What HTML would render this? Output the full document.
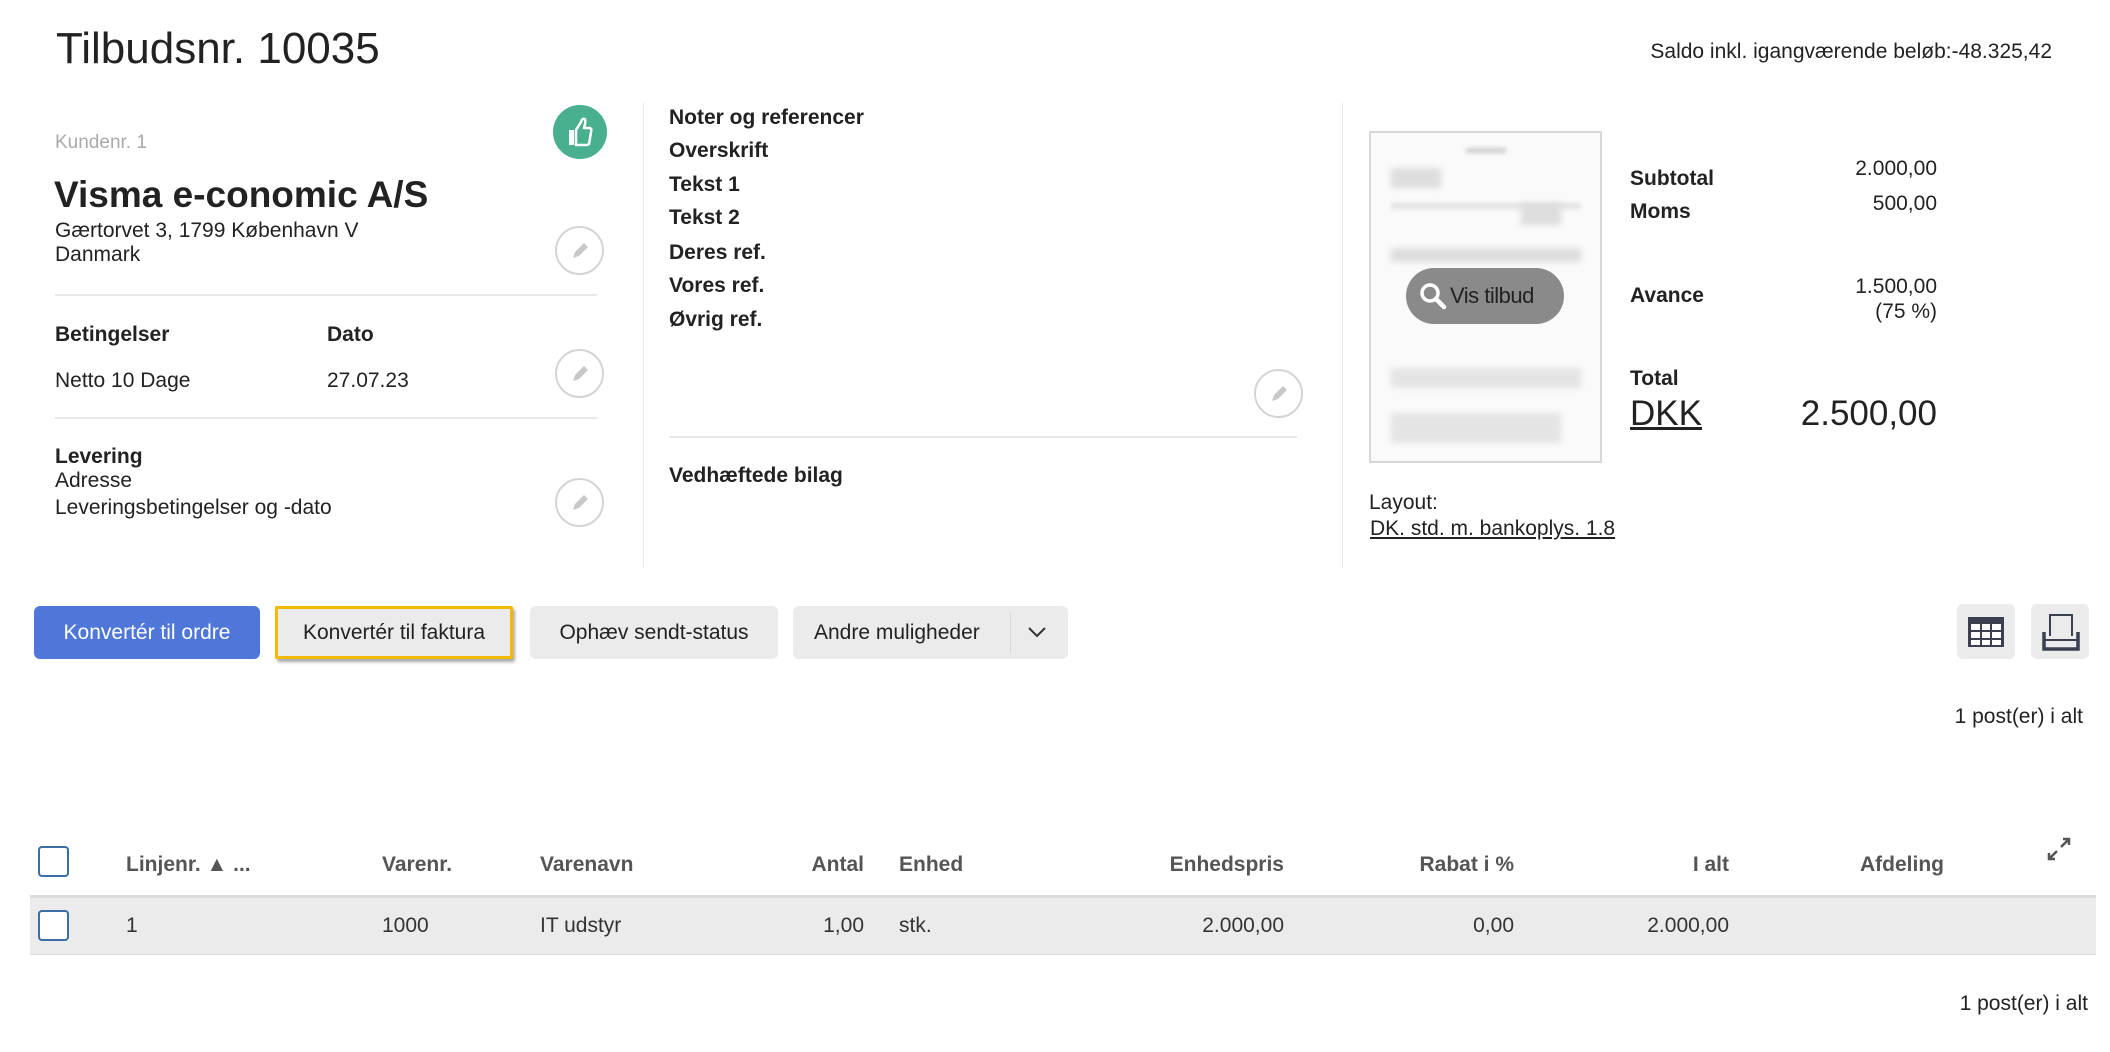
<!DOCTYPE html>
<html><head><meta charset="utf-8"><style>
*{margin:0;padding:0;box-sizing:border-box}
body{width:2110px;height:1052px;background:#fff;font-family:"Liberation Sans",Arial,sans-serif;color:#222;position:relative;overflow:hidden}
.a{position:absolute;white-space:nowrap;line-height:1}
.b{font-weight:bold}
.r{text-align:right}
.t20{font-size:21px}
.ed{position:absolute;width:49px;height:49px;border:2px solid #d4d4d4;border-radius:50%}
.ed svg{position:absolute;left:12px;top:12px}
.vl{position:absolute;width:1px;background:#e6e6e6}
.hl{position:absolute;height:2px;background:#e8e8e8}
.btn{position:absolute;top:606px;height:53px;border-radius:6px;background:#ebebeb;font-size:21px;display:flex;align-items:center;justify-content:center;color:#222}
.th{font-size:21px;font-weight:bold;color:#555;top:854px}
.td{font-size:21px;color:#333;top:915px}
.cb{position:absolute;width:31px;height:31px;border:2px solid #3a6ea5;border-radius:4px;background:#fff}
</style></head><body>
<div class="a" style="left:56px;top:27px;font-size:44px;color:#222">Tilbudsnr. 10035</div>
<div class="a t20" style="right:58px;top:41px">Saldo inkl. igangværende beløb:-48.325,42</div>

<div class="a" style="left:55px;top:133px;font-size:19px;color:#aaa">Kundenr. 1</div>
<div class="a" style="left:553px;top:105px;width:54px;height:54px;border-radius:50%;background:#48b08f">
<svg width="54" height="54" viewBox="0 0 54 54"><rect x="16" y="25" width="5" height="15" fill="#fff"/><path d="M23 25 L28 17 Q29 13 32 14 Q33 17 31 23 L37 23 Q39 24 38 27 L36 39 Q35 40 33 40 L23 40 Z" fill="none" stroke="#fff" stroke-width="2.5" stroke-linejoin="round"/></svg></div>
<div class="a b" style="left:54px;top:176px;font-size:37px;color:#222">Visma e-conomic A/S</div>
<div class="a t20" style="left:55px;top:220px">Gærtorvet 3, 1799 København V</div>
<div class="a t20" style="left:55px;top:244px">Danmark</div>
<div class="hl" style="left:55px;top:294px;width:542px"></div>
<div class="a t20 b" style="left:55px;top:324px">Betingelser</div>
<div class="a t20 b" style="left:327px;top:324px">Dato</div>
<div class="a t20" style="left:55px;top:370px">Netto 10 Dage</div>
<div class="a t20" style="left:327px;top:370px">27.07.23</div>
<div class="hl" style="left:55px;top:417px;width:542px"></div>
<div class="a t20 b" style="left:55px;top:446px">Levering</div>
<div class="a t20" style="left:55px;top:470px">Adresse</div>
<div class="a t20" style="left:55px;top:497px">Leveringsbetingelser og -dato</div>

<div class="ed" style="left:555px;top:226px"><svg width="22" height="22" viewBox="0 0 22 22"><path d="M4 18 L6 12 L15 3 L19 7 L10 16 Z" fill="#c8c8c8"/></svg></div>
<div class="ed" style="left:555px;top:349px"><svg width="22" height="22" viewBox="0 0 22 22"><path d="M4 18 L6 12 L15 3 L19 7 L10 16 Z" fill="#c8c8c8"/></svg></div>
<div class="ed" style="left:555px;top:478px"><svg width="22" height="22" viewBox="0 0 22 22"><path d="M4 18 L6 12 L15 3 L19 7 L10 16 Z" fill="#c8c8c8"/></svg></div>
<div class="ed" style="left:1254px;top:369px"><svg width="22" height="22" viewBox="0 0 22 22"><path d="M4 18 L6 12 L15 3 L19 7 L10 16 Z" fill="#c8c8c8"/></svg></div>

<div class="vl" style="left:643px;top:103px;height:465px"></div>
<div class="vl" style="left:1342px;top:103px;height:465px"></div>

<div class="a t20 b" style="left:669px;top:107px">Noter og referencer</div>
<div class="a t20 b" style="left:669px;top:140px">Overskrift</div>
<div class="a t20 b" style="left:669px;top:174px">Tekst 1</div>
<div class="a t20 b" style="left:669px;top:207px">Tekst 2</div>
<div class="a t20 b" style="left:669px;top:242px">Deres ref.</div>
<div class="a t20 b" style="left:669px;top:275px">Vores ref.</div>
<div class="a t20 b" style="left:669px;top:309px">Øvrig ref.</div>
<div class="hl" style="left:669px;top:436px;width:628px"></div>
<div class="a t20 b" style="left:669px;top:465px">Vedhæftede bilag</div>

<div class="a" style="left:1369px;top:131px;width:233px;height:332px;border:2px solid #d8d8d8;background:#fafafa;overflow:hidden">
<div style="position:absolute;left:95px;top:15px;width:40px;height:5px;background:#ccc;filter:blur(2px)"></div>
<div style="position:absolute;left:20px;top:35px;width:50px;height:20px;background:#ddd;filter:blur(3px)"></div>
<div style="position:absolute;left:20px;top:70px;width:190px;height:6px;background:#e2e2e2;filter:blur(2px)"></div>
<div style="position:absolute;left:150px;top:70px;width:40px;height:22px;background:#ddd;filter:blur(3px)"></div>
<div style="position:absolute;left:20px;top:115px;width:190px;height:14px;background:#ddd;filter:blur(3px)"></div>
<div style="position:absolute;left:20px;top:235px;width:190px;height:20px;background:#e4e4e4;filter:blur(3px)"></div>
<div style="position:absolute;left:20px;top:280px;width:170px;height:30px;background:#e4e4e4;filter:blur(3px)"></div>
</div>
<div class="a" style="left:1406px;top:268px;width:158px;height:56px;border-radius:28px;background:#8a8a8a;display:flex;align-items:center;padding-left:12px">
<svg width="30" height="30" viewBox="0 0 30 30"><circle cx="12" cy="12" r="8" fill="none" stroke="#fff" stroke-width="3.5"/><path d="M18 18 L26 26" stroke="#fff" stroke-width="4.5" stroke-linecap="round"/></svg>
<span style="font-size:22px;color:#222;margin-left:2px;letter-spacing:-0.5px">Vis tilbud</span></div>

<div class="a t20 b" style="left:1630px;top:168px">Subtotal</div>
<div class="a t20 r" style="right:173px;top:158px">2.000,00</div>
<div class="a t20 b" style="left:1630px;top:201px">Moms</div>
<div class="a t20 r" style="right:173px;top:193px">500,00</div>
<div class="a t20 b" style="left:1630px;top:285px">Avance</div>
<div class="a t20 r" style="right:173px;top:276px">1.500,00</div>
<div class="a t20 r" style="right:173px;top:301px">(75 %)</div>
<div class="a t20 b" style="left:1630px;top:368px">Total</div>
<div class="a" style="left:1630px;top:396px;font-size:35px;text-decoration:underline">DKK</div>
<div class="a r" style="right:173px;top:396px;font-size:35px">2.500,00</div>
<div class="a t20" style="left:1369px;top:492px">Layout:</div>
<div class="a t20" style="left:1370px;top:518px;text-decoration:underline">DK. std. m. bankoplys. 1.8</div>

<div class="btn" style="left:34px;width:226px;background:#4f76d9;color:#fff">Konvertér til ordre</div>
<div class="btn" style="left:275px;width:238px;border:3px solid #f3b800;border-radius:2px;box-shadow:2px 3px 3px rgba(0,0,0,.35)">Konvertér til faktura</div>
<div class="btn" style="left:530px;width:248px">Ophæv sendt-status</div>
<div class="btn" style="left:793px;width:275px;justify-content:flex-start;padding-left:21px">Andre muligheder
<div style="position:absolute;left:217px;top:6px;width:1px;height:41px;background:#d6d6d6"></div>
<svg style="position:absolute;left:234px;top:19px" width="20" height="14" viewBox="0 0 20 14"><path d="M2 3 L10 11 L18 3" fill="none" stroke="#333" stroke-width="2"/></svg></div>

<div class="btn" style="left:1957px;top:604px;width:58px;height:55px">
<svg width="38" height="32" viewBox="0 0 38 32"><rect x="1" y="1" width="36" height="30" fill="#3c3f52"/><g fill="#fff"><rect x="4" y="8" width="9" height="6"/><rect x="15" y="8" width="8" height="6"/><rect x="25" y="8" width="9" height="6"/><rect x="4" y="16" width="9" height="6"/><rect x="15" y="16" width="8" height="6"/><rect x="25" y="16" width="9" height="6"/><rect x="4" y="24" width="9" height="5"/><rect x="15" y="24" width="8" height="5"/><rect x="25" y="24" width="9" height="5"/></g></svg></div>
<div class="btn" style="left:2031px;top:604px;width:58px;height:55px">
<svg width="40" height="40" viewBox="0 0 40 40"><path d="M10 24 V3 H32 V24" fill="none" stroke="#3c3f52" stroke-width="2"/><path d="M4 20 V37 H38 V20" fill="none" stroke="#3c3f52" stroke-width="3.5"/><path d="M5 28 H37" stroke="#3c3f52" stroke-width="2"/></svg></div>

<div class="a t20 r" style="right:27px;top:706px">1 post(er) i alt</div>

<div class="cb" style="left:38px;top:846px"></div>
<div class="a th" style="left:126px">Linjenr. ▲ ...</div>
<div class="a th" style="left:382px">Varenr.</div>
<div class="a th" style="left:540px">Varenavn</div>
<div class="a th r" style="right:1246px">Antal</div>
<div class="a th" style="left:899px">Enhed</div>
<div class="a th r" style="right:826px">Enhedspris</div>
<div class="a th r" style="right:596px">Rabat i %</div>
<div class="a th r" style="right:381px">I alt</div>
<div class="a th" style="left:1860px">Afdeling</div>
<svg class="a" style="left:2046px;top:836px" width="26" height="26" viewBox="0 0 26 26"><path d="M15 11 L23 3 M17 3 H23 V9 M11 15 L3 23 M3 17 V23 H9" fill="none" stroke="#555" stroke-width="2.5"/></svg>

<div class="a" style="left:30px;top:895px;width:2066px;height:60px;background:#ebebeb;border-top:3px solid #dcdcdc;border-bottom:1px solid #ddd"></div>
<div class="cb" style="left:38px;top:910px"></div>
<div class="a td" style="left:126px">1</div>
<div class="a td" style="left:382px">1000</div>
<div class="a td" style="left:540px">IT udstyr</div>
<div class="a td r" style="right:1246px">1,00</div>
<div class="a td" style="left:899px">stk.</div>
<div class="a td r" style="right:826px">2.000,00</div>
<div class="a td r" style="right:596px">0,00</div>
<div class="a td r" style="right:381px">2.000,00</div>

<div class="a t20 r" style="right:22px;top:993px">1 post(er) i alt</div>
</body></html>
